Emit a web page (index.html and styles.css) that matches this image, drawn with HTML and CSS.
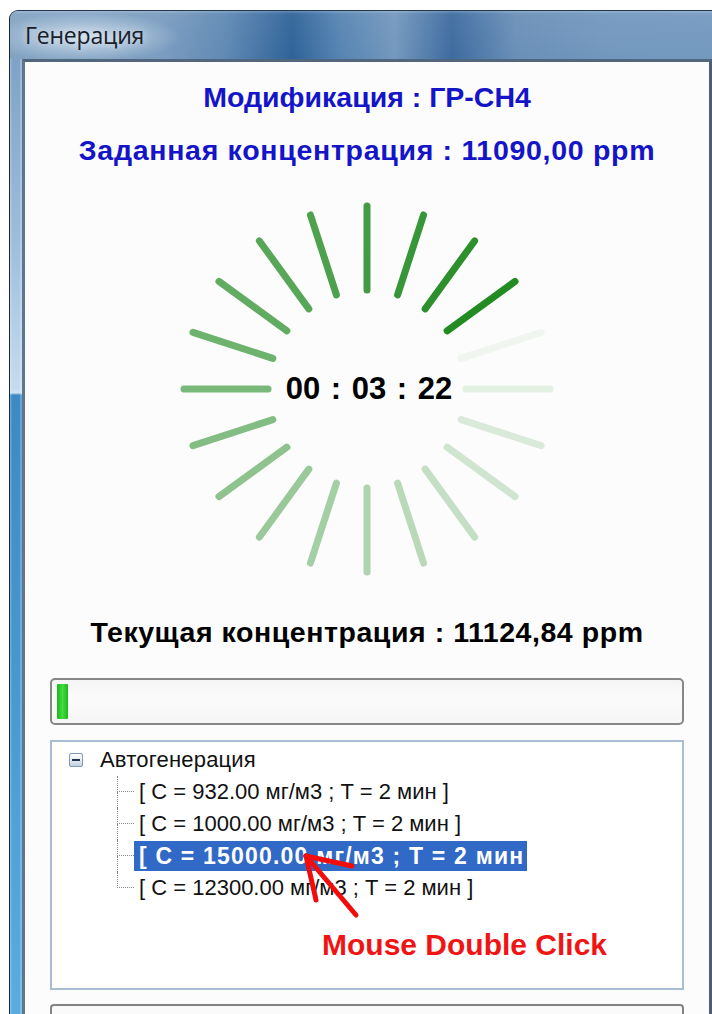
FILE: index.html
```html
<!DOCTYPE html>
<html lang="ru">
<head>
<meta charset="utf-8">
<title>Генерация</title>
<link rel="stylesheet" href="styles.css">
</head>
<body>
<div class="window">
  <div class="titlebar"><span class="title">Генерация</span></div>
  <div class="frame">
    <div class="frame-edge"></div>
    <main class="client">
      <div class="caption caption-blue">Модификация : ГР-СН4</div>
      <div class="caption caption-blue caption-second">Заданная концентрация : 11090,00 ppm</div>

      <div class="spinner">
        <svg class="spinner-svg" width="392" height="392" viewBox="-196 -196 392 392">
          <g stroke="#228b22" stroke-width="7" stroke-linecap="round">
            <line x1="0" y1="-99" x2="0" y2="-183" opacity="0.85" transform="rotate(0)"/>
            <line x1="0" y1="-99" x2="0" y2="-183" opacity="0.90" transform="rotate(18)"/>
            <line x1="0" y1="-99" x2="0" y2="-183" opacity="0.95" transform="rotate(36)"/>
            <line x1="0" y1="-99" x2="0" y2="-183" opacity="1" transform="rotate(54)"/>
            <line x1="0" y1="-99" x2="0" y2="-183" opacity="0.05" transform="rotate(72)"/>
            <line x1="0" y1="-99" x2="0" y2="-183" opacity="0.10" transform="rotate(90)"/>
            <line x1="0" y1="-99" x2="0" y2="-183" opacity="0.15" transform="rotate(108)"/>
            <line x1="0" y1="-99" x2="0" y2="-183" opacity="0.20" transform="rotate(126)"/>
            <line x1="0" y1="-99" x2="0" y2="-183" opacity="0.25" transform="rotate(144)"/>
            <line x1="0" y1="-99" x2="0" y2="-183" opacity="0.30" transform="rotate(162)"/>
            <line x1="0" y1="-99" x2="0" y2="-183" opacity="0.35" transform="rotate(180)"/>
            <line x1="0" y1="-99" x2="0" y2="-183" opacity="0.40" transform="rotate(198)"/>
            <line x1="0" y1="-99" x2="0" y2="-183" opacity="0.45" transform="rotate(216)"/>
            <line x1="0" y1="-99" x2="0" y2="-183" opacity="0.50" transform="rotate(234)"/>
            <line x1="0" y1="-99" x2="0" y2="-183" opacity="0.55" transform="rotate(252)"/>
            <line x1="0" y1="-99" x2="0" y2="-183" opacity="0.60" transform="rotate(270)"/>
            <line x1="0" y1="-99" x2="0" y2="-183" opacity="0.65" transform="rotate(288)"/>
            <line x1="0" y1="-99" x2="0" y2="-183" opacity="0.70" transform="rotate(306)"/>
            <line x1="0" y1="-99" x2="0" y2="-183" opacity="0.75" transform="rotate(324)"/>
            <line x1="0" y1="-99" x2="0" y2="-183" opacity="0.80" transform="rotate(342)"/>
          </g>
        </svg>
        <div class="timer">00 : 03 : 22</div>
      </div>

      <div class="caption caption-black">Текущая концентрация : 11124,84 ppm</div>

      <div class="progress"><div class="progress-fill" style="width: 11px"></div></div>

      <div class="tree">
        <div class="node-root">
          <span class="expander"><span class="minus"></span></span>
          <span class="node-text">Автогенерация</span>
        </div>
        <div class="children">
          <div class="node"><span class="branch"></span><span class="node-label">[ C = 932.00 мг/м3 ; T = 2 мин ]</span></div>
          <div class="node"><span class="branch"></span><span class="node-label">[ C = 1000.00 мг/м3 ; T = 2 мин ]</span></div>
          <div class="node"><span class="branch"></span><span class="node-label selected">[ C = 15000.00 мг/м3 ; T = 2 мин ]</span></div>
          <div class="node last"><span class="branch"></span><span class="node-label">[ C = 12300.00 мг/м3 ; T = 2 мин ]</span></div>
        </div>
        <div class="hint">Mouse Double Click</div>
        <svg class="hint-arrow" width="634" height="250" viewBox="0 0 634 250">
          <g stroke="#f20c0c" stroke-width="5" stroke-linecap="round" fill="none">
            <line x1="304" y1="173" x2="254" y2="114"/>
            <line x1="254" y1="114" x2="264" y2="158"/>
            <line x1="254" y1="114" x2="300" y2="124"/>
          </g>
        </svg>
      </div>

      <div class="lower-box"></div>
    </main>
  </div>
</div>
</body>
</html>
```

FILE: styles.css
```css
html, body {
  margin: 0;
  padding: 0;
  background: #ffffff;
  height: 1014px;
  overflow: hidden;
}

.window {
  margin: 10px 0 0 9px;
  width: 703px;
  height: 1004px;
  box-sizing: border-box;
  border-top: 1px solid #22364e;
  border-left: 1px solid #1a2634;
  border-top-left-radius: 9px;
  display: flex;
  flex-direction: column;
  overflow: hidden;
  background: #6f94bb;
}

/* glass caption strip */
.titlebar {
  height: 48px;
  flex: none;
  display: flex;
  align-items: center;
  padding-left: 15px;
  background:
    radial-gradient(ellipse 95px 26px at 75px 26px, rgba(214, 228, 240, 0.85), rgba(214, 228, 240, 0) 100%),
    linear-gradient(to bottom, rgba(255, 255, 255, 0.25) 0, rgba(255, 255, 255, 0.05) 3px, rgba(255, 255, 255, 0) 100%),
    linear-gradient(to right, #84a4c4 0, #7b9dc0 150px, #6089b4 215px, #2f6399 282px, #5684b2 330px, #7498be 385px, #3d6b9f 442px, #6a8fb8 505px, #7398bf 600px, #7499bf 100%);
}

.title {
  font-family: "Open Sans", "Noto Sans", sans-serif;
  font-size: 23px;
  color: #18202a;
  letter-spacing: -0.2px;
  text-shadow: 0 0 8px rgba(255, 255, 255, 0.7);
}

.frame {
  flex: 1;
  display: flex;
  min-height: 0;
}

.frame-edge {
  width: 12px;
  flex: none;
  background:
    linear-gradient(to right, rgba(255, 255, 255, 0.35) 0, rgba(255, 255, 255, 0) 2px, rgba(255, 255, 255, 0) 10px, rgba(255, 255, 255, 0.45) 11px, rgba(255, 255, 255, 0) 12px),
    linear-gradient(to bottom, #7ea2c8 0, #9dbddc 180px, #c6dcee 330px, #cfe2f1 334px, #3c8ac5 336px, #4797cf 600px, #58acdf 944px);
}

.client {
  flex: 1;
  min-width: 0;
  border-top: 3px solid #52667e;
  border-left: 3px solid #5f7590;
  border-right: 3px solid #4a5e76;
  background: #fcfcfc;
  display: flex;
  flex-direction: column;
  align-items: stretch;
}

/* the panel is taller than the window; keep every block at its own size */
.client > * {
  flex: none;
}

.caption {
  font-family: "Liberation Sans", Arial, sans-serif;
  font-weight: bold;
  font-size: 28.5px;
  line-height: 34px;
  text-align: center;
  white-space: nowrap;
}

.caption-blue {
  color: #1414c8;
  margin-top: 18px;
}

.caption-second {
  margin-top: 19px;
  letter-spacing: 0.7px;
}

.caption-black {
  color: #000000;
  margin-top: 30px;
  letter-spacing: 0.55px;
}

.spinner {
  margin-top: 26px;
  height: 392px;
  display: grid;
  place-items: center;
}

.spinner-svg,
.timer {
  grid-area: 1 / 1;
}

.spinner-svg {
  display: block;
}

.timer {
  font-family: "Liberation Sans", Arial, sans-serif;
  font-weight: bold;
  font-size: 31px;
  word-spacing: 2px;
  color: #000000;
  white-space: pre;
  margin-left: 4px;
}

.progress {
  margin: 29px 0 0 25px;
  width: 634px;
  height: 47px;
  box-sizing: border-box;
  border: 2px solid #878787;
  border-radius: 5px;
  background: linear-gradient(to bottom, #f4f4f4 0, #fbfbfb 40%, #f6f6f6 100%);
  padding: 4px 5px;
  display: flex;
}

.progress-fill {
  height: 100%;
  border-radius: 1px;
  background: linear-gradient(to right, #1bb81b 0, #40dc40 50%, #1bb81b 100%);
}

.tree {
  position: relative;
  margin: 15px 0 0 25px;
  width: 634px;
  height: 250px;
  box-sizing: border-box;
  border: 2px solid #a9bdd4;
  background: #ffffff;
  padding-top: 2px;
  font-family: "Liberation Sans", Arial, sans-serif;
  font-size: 22px;
  color: #111111;
}

.node-root {
  height: 32px;
  display: flex;
  align-items: center;
}

.expander {
  margin-left: 17px;
  width: 14px;
  height: 14px;
  box-sizing: border-box;
  border: 1px solid #7f9ab6;
  border-radius: 2px;
  background: linear-gradient(to bottom, #ffffff 0, #e6ecf3 50%, #c4d1de 100%);
  display: flex;
  align-items: center;
  justify-content: center;
}

.minus {
  width: 8px;
  height: 2px;
  background: #21324a;
}

.node-text {
  margin-left: 17px;
  letter-spacing: 0.2px;
}

.node {
  height: 32px;
  display: flex;
  align-items: center;
  padding-left: 65px;
}

.branch {
  width: 17px;
  height: 32px;
  flex: none;
  display: flex;
  flex-direction: column;
}

.branch::before,
.branch::after {
  content: "";
  height: 16px;
  box-sizing: border-box;
  border-left: 1px dotted #8c8c8c;
}

.branch::before {
  border-bottom: 1px dotted #8c8c8c;
}

.node.last .branch::after {
  border-left: none;
}

.node-label {
  padding: 0 5px;
  height: 30px;
  line-height: 30px;
  white-space: nowrap;
}

.node-label.selected {
  width: 393px;
  box-sizing: border-box;
  overflow: hidden;
  background: #3169c6;
  color: #ffffff;
  font-weight: bold;
  font-size: 23px;
  letter-spacing: 1.2px;
}

.hint {
  margin: 24px 0 0 270px;
  font-family: "Liberation Sans", Arial, sans-serif;
  font-weight: bold;
  font-size: 30px;
  line-height: 34px;
  color: #f01414;
  white-space: nowrap;
}

.hint-arrow {
  position: absolute;
  left: 0;
  top: 0;
  pointer-events: none;
}

.lower-box {
  margin: 14px 0 0 25px;
  width: 634px;
  height: 40px;
  box-sizing: border-box;
  border: 2px solid #838383;
  border-radius: 4px;
  background: #fafafa;
}
```
